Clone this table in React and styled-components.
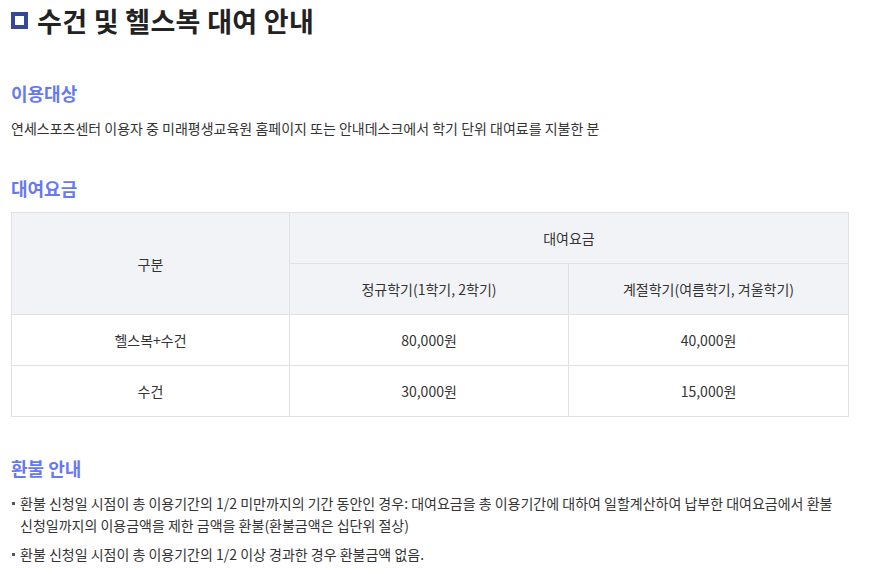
import React from "react";
import styled, { createGlobalStyle } from "styled-components";

const Global = createGlobalStyle`
  html, body { margin: 0; padding: 0; background: #fff; }
  body { font-family: "Noto Sans CJK KR", "Noto Sans", sans-serif; color: #333; }
`;

const Page = styled.div`
  width: 837px;
  margin-left: 11px;
`;

const Title = styled.h1`
  display: flex;
  align-items: center;
  gap: 9px;
  height: 40px;
  margin: 0;
  font-size: 27px;
  font-weight: 700;
  color: #222;
  letter-spacing: 0.3px;
`;

const TitleMark = styled.span`
  box-sizing: border-box;
  width: 17px;
  height: 17px;
  border: 4px solid #34479b;
  background: #fff;
  flex: none;
`;

const Heading = styled.h2`
  margin: ${(p) => p.$top}px 0 11px;
  font-size: 18px;
  line-height: 26px;
  font-weight: 700;
  color: #6679f2;
`;

const Text = styled.p`
  margin: 0;
  font-size: 14px;
  line-height: 22px;
  color: #333;
`;

const Table = styled.table`
  width: 837px;
  border-collapse: collapse;
  table-layout: fixed;
  font-size: 14px;
  color: #333;
`;

const Th = styled.th`
  height: 50px;
  padding: 0;
  background: #f2f3f7;
  border: 1px solid #e1e1e4;
  font-weight: 400;
  text-align: center;
`;

const Td = styled.td`
  height: 50px;
  padding: 0;
  border: 1px solid #e1e1e4;
  text-align: center;
`;

const List = styled.ul`
  list-style: none;
  margin: 0;
  padding: 0;
`;

const Item = styled.li`
  position: relative;
  padding-left: 9px;
  margin-bottom: 7px;
  font-size: 14px;
  line-height: 22px;
  color: #333;
  &::before {
    content: "";
    position: absolute;
    left: 1px;
    top: 10px;
    width: 3px;
    height: 3px;
    background: #555;
  }
`;

export default function App() {
  return (
    <>
      <Global />
      <Page>
        <Title>
          <TitleMark />
          수건 및 헬스복 대여 안내
        </Title>

        <Heading $top={40}>이용대상</Heading>
        <Text>연세스포츠센터 이용자 중 미래평생교육원 홈페이지 또는 안내데스크에서 학기 단위 대여료를 지불한 분</Text>

        <Heading $top={36}>대여요금</Heading>
        <Table>
          <colgroup>
            <col style={{ width: 278 }} />
            <col style={{ width: 279 }} />
            <col style={{ width: 280 }} />
          </colgroup>
          <thead>
            <tr>
              <Th rowSpan={2}>구분</Th>
              <Th colSpan={2}>대여요금</Th>
            </tr>
            <tr>
              <Th>정규학기(1학기, 2학기)</Th>
              <Th>계절학기(여름학기, 겨울학기)</Th>
            </tr>
          </thead>
          <tbody>
            <tr>
              <Td>헬스복+수건</Td>
              <Td>80,000원</Td>
              <Td>40,000원</Td>
            </tr>
            <tr>
              <Td>수건</Td>
              <Td>30,000원</Td>
              <Td>15,000원</Td>
            </tr>
          </tbody>
        </Table>

        <Heading $top={38}>환불 안내</Heading>
        <List>
          <Item>환불 신청일 시점이 총 이용기간의 1/2 미만까지의 기간 동안인 경우: 대여요금을 총 이용기간에 대하여 일할계산하여 납부한 대여요금에서 환불 신청일까지의 이용금액을 제한 금액을 환불(환불금액은 십단위 절상)</Item>
          <Item>환불 신청일 시점이 총 이용기간의 1/2 이상 경과한 경우 환불금액 없음.</Item>
        </List>
      </Page>
    </>
  );
}
